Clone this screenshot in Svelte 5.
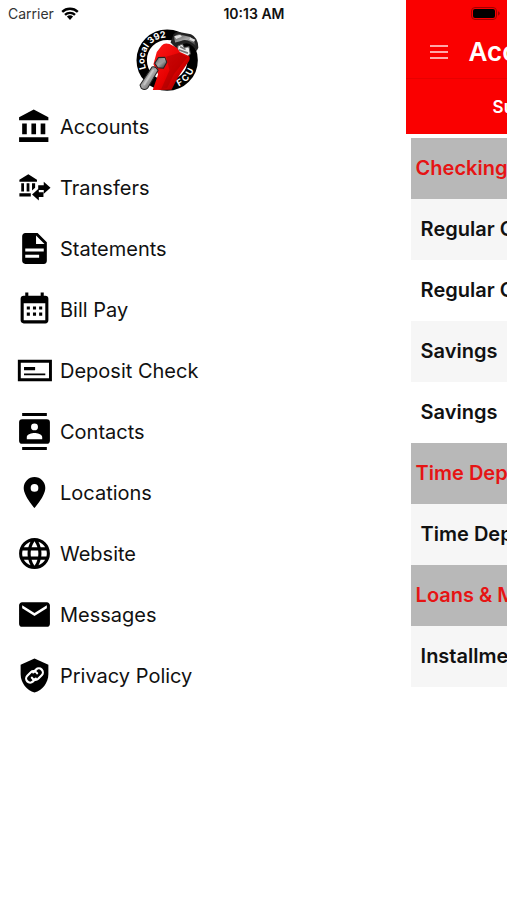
<script lang="ts">
  type MenuItem = { label: string; path: string; evenOdd?: boolean };

  const menu: MenuItem[] = [
    {
      label: "Accounts",
      path: "M11.5,1L2,6V8H21V6M16,10V17H19V10M2,22H21V19H2V22M10,10V17H13V10M4,10V17H7V10H4Z",
    },
    {
      label: "Transfers",
      path: "M8 3.4L2.2 6.9V8.2H13.6V6.9ZM3.4 9.2H5.2V14.6H3.4ZM6.9 9.2H8.7V14.6H6.9ZM10.4 9.2H12.4V12.2L10.4 13.9ZM2.2 15.7H9.6V17.8H2.2ZM14.4 10.5H18V8.2L22.4 12.1L18 16V13.7H14.4ZM17.8 15V18.2H14.8V20.5L10.4 16.6L14.8 12.7V15Z",
    },
    {
      label: "Statements",
      path: "M13,9H18.5L13,3.5V9M6,2H14L20,8V20A2,2 0 0,1 18,22H6C4.89,22 4,21.1 4,20V4C4,2.89 4.89,2 6,2M15,18V16H6V18H15M18,14V12H6V14H18Z",
    },
    {
      label: "Bill Pay",
      path: "M9,10V12H7V10H9M13,10V12H11V10H13M17,10V12H15V10H17M19,3A2,2 0 0,1 21,5V19A2,2 0 0,1 19,21H5C3.89,21 3,20.1 3,19V5A2,2 0 0,1 5,3H6V1H8V3H16V1H18V3H19M19,19V8H5V19H19M9,14V16H7V14H9M13,14V16H11V14H13M17,14V16H15V14H17Z",
    },
    {
      label: "Deposit Check",
      path: "M1.2 5H23.3V19H1.2ZM3.1 6.9V17.1H21.4V6.9ZM5.2 9.8H12.4V11.8H5.2ZM5.2 14H19V15H5.2Z",
      evenOdd: true,
    },
    {
      label: "Contacts",
      path: "M20,0H4V2H20V0M4,24H20V22H4V24M20,4H4A2,2 0 0,0 2,6V18A2,2 0 0,0 4,20H20A2,2 0 0,0 22,18V6A2,2 0 0,0 20,4M12,6.75A2.25,2.25 0 0,1 14.25,9A2.25,2.25 0 0,1 12,11.25A2.25,2.25 0 0,1 9.75,9A2.25,2.25 0 0,1 12,6.75M17,17H7V15.5C7,13.83 10.33,13 12,13C13.67,13 17,13.83 17,15.5V17Z",
    },
    {
      label: "Locations",
      path: "M12,11.5A2.5,2.5 0 0,1 9.5,9A2.5,2.5 0 0,1 12,6.5A2.5,2.5 0 0,1 14.5,9A2.5,2.5 0 0,1 12,11.5M12,2A7,7 0 0,0 5,9C5,14.25 12,22 12,22C12,22 19,14.25 19,9A7,7 0 0,0 12,2Z",
    },
    {
      label: "Website",
      path: "M16.36,14C16.44,13.34 16.5,12.68 16.5,12C16.5,11.32 16.44,10.66 16.36,10H19.74C19.9,10.64 20,11.31 20,12C20,12.69 19.9,13.36 19.74,14M14.59,19.56C15.19,18.45 15.65,17.25 15.97,16H18.92C17.96,17.65 16.43,18.93 14.59,19.56M14.34,14H9.66C9.56,13.34 9.5,12.68 9.5,12C9.5,11.32 9.56,10.65 9.66,10H14.34C14.43,10.65 14.5,11.32 14.5,12C14.5,12.68 14.43,13.34 14.34,14M12,19.96C11.17,18.76 10.5,17.43 10.09,16H13.91C13.5,17.43 12.83,18.76 12,19.96M8,8H5.08C6.03,6.34 7.57,5.06 9.4,4.44C8.8,5.55 8.35,6.75 8,8M5.08,16H8C8.35,17.25 8.8,18.45 9.4,19.56C7.57,18.93 6.03,17.65 5.08,16M4.26,14C4.1,13.36 4,12.69 4,12C4,11.31 4.1,10.64 4.26,10H7.64C7.56,10.66 7.5,11.32 7.5,12C7.5,12.68 7.56,13.34 7.64,14M12,4.03C12.83,5.23 13.5,6.57 13.91,8H10.09C10.5,6.57 11.17,5.23 12,4.03M18.92,8H15.97C15.65,6.75 15.19,5.55 14.59,4.44C16.43,5.07 17.96,6.34 18.92,8M12,2C6.47,2 2,6.5 2,12A10,10 0 0,0 12,22A10,10 0 0,0 22,12A10,10 0 0,0 12,2Z",
    },
    {
      label: "Messages",
      path: "M20,8L12,13L4,8V6L12,11L20,6M20,4H4C2.89,4 2,4.89 2,6V18A2,2 0 0,0 4,20H20A2,2 0 0,0 22,18V6C22,4.89 21.1,4 20,4Z",
    },
    {
      label: "Privacy Policy",
      path: "M12,1L3,5V11C3,16.55 6.84,21.74 12,23C17.16,21.74 21,16.55 21,11V5Z",
    },
  ];

  const groups = [
    {
      title: "Checking & Savings",
      accounts: ["Regular Checking", "Regular Checking", "Savings", "Savings"],
    },
    { title: "Time Deposits", accounts: ["Time Deposit"] },
    { title: "Loans & Mortgages", accounts: ["Installment Loan"] },
  ];
</script>

<div class="app">
  <div class="status-bar">
    <span class="carrier">
      Carrier
      <svg class="wifi" viewBox="0 0 18 13" aria-hidden="true">
        <path d="M1.2 4.9a11.4 11.4 0 0 1 15.6 0M4 7.9a7.2 7.2 0 0 1 10 0" />
        <path class="dot" d="M5.9 9.6a4.6 4.6 0 0 1 6.2 0L9 12.9z" />
      </svg>
    </span>
    <time>10:13 AM</time>
    <svg class="battery" viewBox="0 0 29 13" aria-hidden="true">
      <rect class="shell" x="0.5" y="0.5" width="25" height="12" rx="3.5" />
      <rect x="2" y="2" width="22" height="9" rx="2" />
      <path class="nub" d="M27 4.3q1.8 .6 1.8 2.2T27 8.7z" />
    </svg>
  </div>

  <nav class="drawer" aria-label="Main menu">
    <svg class="logo" viewBox="26 22 188 188" role="img" aria-label="Local 392 FCU">
      <defs>
        <path id="ring-top" d="M56 140A68 68 0 0 1 153 56" />
        <path id="ring-bottom" d="M142 197A85 85 0 0 0 204 111" />
        <linearGradient id="steel" x1="0" y1="0" x2="1" y2="1">
          <stop offset="0" stop-color="#555" />
          <stop offset="0.5" stop-color="#aaa" />
          <stop offset="1" stop-color="#222" />
        </linearGradient>
        <linearGradient id="enamel" x1="0" y1="0" x2="1" y2="1">
          <stop offset="0" stop-color="#ff1a1a" />
          <stop offset="0.55" stop-color="#e60000" />
          <stop offset="1" stop-color="#7c0000" />
        </linearGradient>
      </defs>
      <circle class="ring" cx="119" cy="115" r="76" />
      <text class="ring-text"><textPath href="#ring-top">Local 392</textPath></text>
      <text class="ring-text"><textPath href="#ring-bottom" startOffset="12">F C U</textPath></text>
      <path
        fill="#222"
        d="M129 62L138 38Q145 29 158 32L190 38Q212 48 212 78L207 88L196 74Q184 62 172 65L156 72L150 84Z"
      />
      <path fill="url(#steel)" d="M139 46Q147 35 160 39L188 46Q201 54 205 73L190 61Q174 51 160 58L143 62Z" />
      <path fill="#ddd" d="M140 44L158 39L163 45L146 52ZM188 47L203 54L199 60L185 54Z" />
      <path fill="#eee" stroke="#555" stroke-width="3" d="M151 73L164 67L170 77L184 75L188 96L174 111L149 92Z" />
      <path stroke="#777" stroke-width="5" d="M153 84L181 94M158 75L174 83" />
      <path
        fill="url(#enamel)"
        d="M88 91L103 71Q111 62 126 67L148 78L157 91L185 103Q189 112 181 122L157 158Q143 181 132 203L76 204L92 157L78 127Z"
      />
      <path fill="#a00000" d="M116 105L156 93L179 106L139 157L119 198L101 202L126 145Z" opacity="0.5" />
      <path fill="url(#steel)" stroke="#222" stroke-width="3" d="M82 124L93 107L112 106L118 121L108 139L91 138Z" />
      <path fill="#999" d="M94 113L109 112L111 119L96 126Z" />
      <path fill="url(#steel)" stroke="#222" stroke-width="3" d="M74 135Q84 132 92 145L61 198Q53 207 42 199L38 189Z" />
      <path stroke="#c4c4c4" stroke-width="6" stroke-linecap="round" d="M77 145L51 187" />
    </svg>

    <ul class="menu">
      {#each menu as item}
        <li>
          <a href="#menu">
            <svg viewBox="0 0 24 24" aria-hidden="true">
              <path d={item.path} fill-rule={item.evenOdd ? "evenodd" : "nonzero"} />
              {#if item.label === "Privacy Policy"}
                <g class="chain" transform="rotate(-45 12 12)">
                  <path d="M11.2 14H8.6a2.6 2.6 0 0 1 0-5.2h3.2a2.6 2.6 0 0 1 2.4 3.4" />
                  <path d="M12.8 10h2.6a2.6 2.6 0 0 1 0 5.2h-3.2a2.6 2.6 0 0 1-2.4-3.4" />
                </g>
              {/if}
            </svg>
            {item.label}
          </a>
        </li>
      {/each}
    </ul>
  </nav>

  <main class="screen">
    <header>
      <div class="title-bar">
        <button type="button" aria-label="Close menu">
          <svg viewBox="0 0 18 14" aria-hidden="true">
            <path d="M0 1h18M0 7h18M0 13h18" />
          </svg>
        </button>
        <h1>Accounts</h1>
      </div>
      <a class="tab" href="#summary">Summary</a>
    </header>

    <div class="accounts">
      {#each groups as group}
        <section>
          <h2>{group.title}</h2>
          <ul>
            {#each group.accounts as account}
              <li>{account}</li>
            {/each}
          </ul>
        </section>
      {/each}
    </div>
  </main>
</div>

<style>
  :global(body) {
    background: #fff;
  }

  .app {
    display: grid;
    grid-template-columns: minmax(0, 4fr) minmax(0, 1fr);
    grid-template-rows: 27px 1fr;
    min-height: 100vh;
    overflow: hidden;
    color: #111;
    font-family: Inter, "Liberation Sans", sans-serif;
  }

  ul,
  h1,
  h2 {
    margin: 0;
    padding: 0;
    list-style: none;
  }

  a {
    color: inherit;
    text-decoration: none;
  }

  .status-bar {
    z-index: 1;
    display: grid;
    grid-area: 1 / 1 / 2 / 3;
    grid-template-columns: 1fr auto 1fr;
    align-items: center;
    padding: 0 7px 0 8px;
    font-size: 14px;
  }

  .carrier {
    display: flex;
    align-items: center;
    gap: 7px;
    color: #333;
  }

  .wifi {
    width: 18px;
    height: 13px;
    fill: none;
    stroke: #000;
    stroke-width: 2.4;
  }

  .wifi .dot {
    fill: #000;
    stroke: none;
  }

  time {
    font-weight: 600;
  }

  .battery {
    width: 29px;
    height: 13px;
    justify-self: end;
  }

  .battery .shell {
    fill: none;
    stroke: #a00000;
  }

  .battery .nub {
    fill: #a00000;
  }

  .drawer {
    display: flex;
    grid-area: 1 / 1 / 3 / 2;
    flex-direction: column;
    padding-top: 29px;
  }

  .logo {
    width: 63px;
    height: 63px;
    margin-left: 136px;
    fill: none;
  }

  .ring {
    stroke: #000;
    stroke-width: 31;
  }

  .ring-text {
    fill: #fff;
    font-size: 27px;
    font-weight: 700;
  }

  .menu {
    padding-top: 4px;
  }

  .menu a {
    display: flex;
    height: 61px;
    align-items: center;
    gap: 7px;
    padding-left: 16px;
    font-size: 20px;
  }

  .menu svg {
    width: 37px;
    height: 37px;
    flex: none;
    fill: #000;
  }

  .menu .chain {
    fill: none;
    stroke: #fff;
    stroke-width: 1.4;
    stroke-linecap: round;
  }

  .screen {
    grid-area: 1 / 2 / 3 / 3;
    overflow: hidden;
    white-space: nowrap;
  }

  header {
    background: #fa0000;
    color: #fff;
  }

  .title-bar {
    display: flex;
    height: 53px;
    align-items: center;
    gap: 16px;
    border-bottom: 1px solid #e80000;
    padding: 25px 0 0 19px;
  }

  .title-bar button {
    display: grid;
    width: 28px;
    height: 28px;
    flex: none;
    place-items: center;
    border: 0;
    background: transparent;
    padding: 0;
  }

  .title-bar button svg {
    width: 18px;
    height: 14px;
    fill: none;
    stroke: #ffa8a8;
    stroke-width: 2;
  }

  h1 {
    font-size: 26px;
    font-weight: 600;
  }

  .tab {
    display: flex;
    height: 55px;
    align-items: center;
    padding-left: 87px;
    font-size: 17px;
    font-weight: 600;
  }

  .accounts {
    padding: 4px 0 0 5px;
    font-size: 20px;
    font-weight: 600;
    line-height: 61px;
  }

  h2 {
    background: #b8b8b8;
    color: #e61414;
    font-size: 20px;
    font-weight: 600;
    padding-left: 5px;
  }

  .accounts li {
    padding-left: 10px;
  }

  .accounts li:nth-child(odd) {
    background: #f6f6f6;
  }
</style>
